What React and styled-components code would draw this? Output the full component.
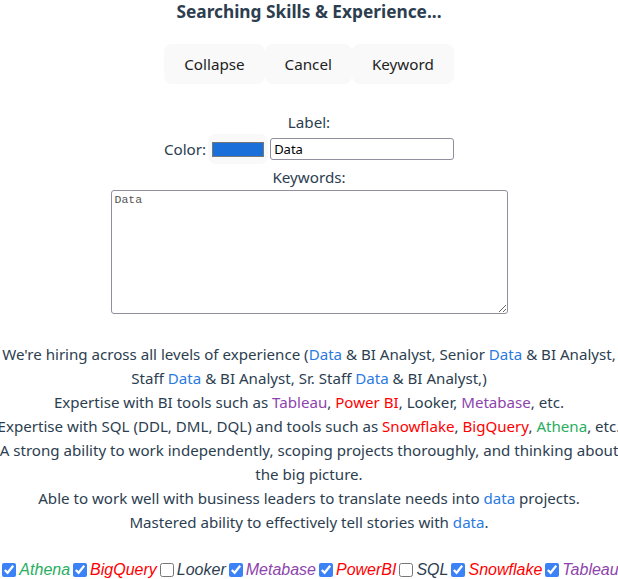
import React, { useState } from 'react';
import styled, { createGlobalStyle } from 'styled-components';

const GlobalStyle = createGlobalStyle`
  html, body {
    margin: 0;
    padding: 0;
    overflow: hidden;
  }
  body {
    font-family: "Noto Sans", "Open Sans", sans-serif;
    color: #2c3e50;
    background: #fff;
  }
`;

const Page = styled.div`
  display: flex;
  flex-direction: column;
  align-items: center;
  width: 618px;
  overflow: hidden;
`;

const Title = styled.h1`
  margin: 1px 0 0;
  font-size: 17.3px;
  line-height: 22px;
  font-weight: 700;
`;

const Toolbar = styled.div`
  display: flex;
  margin-top: 21px;
`;

const Button = styled.button`
  font-family: inherit;
  font-size: 15.2px;
  color: #222;
  background: #f9f9f9;
  border: 1px solid transparent;
  border-radius: 8px;
  height: 40px;
  padding: 0 ${(p) => p.$pad || 19}px;
  cursor: pointer;
`;

const Form = styled.div`
  display: flex;
  flex-direction: column;
  align-items: center;
  margin-top: 26px;
`;

const FieldLabel = styled.div`
  font-size: 15.2px;
  line-height: 24px;
`;

const ColorRow = styled.div`
  display: flex;
  align-items: center;
  gap: 2px;
  margin: 0 0 1px;
`;

const ColorInput = styled.input`
  width: 60px;
  height: 30px;
  padding: 8px 4px 7px 4px;
  background: #f9f9f9;
  border: none;
  border-radius: 8px;
  cursor: pointer;
  &::-webkit-color-swatch-wrapper { padding: 0; }
  &::-webkit-color-swatch {
    border: 1px solid #777;
    border-radius: 0;
  }
`;

const TextInput = styled.input`
  width: 184px;
  height: 22px;
  box-sizing: border-box;
  padding: 1px 3px;
  font-family: inherit;
  font-size: 13px;
  color: #000;
  border: 1px solid #8f8f9d;
  border-radius: 3px;
`;

const KeywordsArea = styled.textarea`
  width: 397px;
  height: 124px;
  box-sizing: border-box;
  margin-top: 1px;
  padding: 2px 3px;
  font-family: "Liberation Mono", monospace;
  font-size: 11.5px;
  color: #555;
  border: 1px solid #8f8f9d;
  border-radius: 3px;
`;

const Description = styled.div`
  display: flex;
  justify-content: center;
  width: 618px;
  margin-top: 28px;
`;

const DescriptionText = styled.div`
  flex: none;
  width: 640px;
  text-align: center;
  font-size: 15.1px;
  line-height: 24px;
`;

const Line = styled.div``;

const Tag = styled.span`
  color: ${(p) => p.$color};
`;

const Filters = styled.div`
  display: flex;
  justify-content: center;
  width: 618px;
  margin-top: 27px;
`;

const FilterList = styled.div`
  flex: none;
  display: flex;
  align-items: center;
  white-space: nowrap;
  font-family: "Liberation Sans", Arial, sans-serif;
  font-style: italic;
  font-size: 16px;
`;

const FilterItem = styled.label`
  display: flex;
  align-items: center;
  color: ${(p) => p.$color};
`;

const Check = styled.input`
  width: 14px;
  height: 14px;
  margin: 0 3px 0 3px;
  accent-color: #3b82f6;
`;

const BLUE = '#2a7ae2';
const PURPLE = '#8e44ad';
const RED = '#ff0000';
const GREEN = '#27ae60';
const DARK = '#2c3e50';

const filters = [
  { name: 'Athena', color: GREEN, on: true },
  { name: 'BigQuery', color: RED, on: true },
  { name: 'Looker', color: DARK, on: false },
  { name: 'Metabase', color: PURPLE, on: true },
  { name: 'PowerBI', color: RED, on: true },
  { name: 'SQL', color: DARK, on: false },
  { name: 'Snowflake', color: RED, on: true },
  { name: 'Tableau', color: PURPLE, on: true },
];

export default function App() {
  const [checks, setChecks] = useState(filters.map((f) => f.on));

  return (
    <>
      <GlobalStyle />
      <Page>
        <Title>Searching Skills &amp; Experience...</Title>
        <Toolbar>
          <Button $pad={19}>Collapse</Button>
          <Button $pad={19}>Cancel</Button>
          <Button $pad={19}>Keyword</Button>
        </Toolbar>

        <Form>
          <FieldLabel>Label:</FieldLabel>
          <ColorRow>
            <FieldLabel>Color:</FieldLabel>
            <ColorInput type="color" defaultValue="#1a6fd8" />
            <TextInput type="text" defaultValue="Data" />
          </ColorRow>
          <FieldLabel>Keywords:</FieldLabel>
          <KeywordsArea defaultValue="Data" />
        </Form>

        <Description>
          <DescriptionText>
            <Line>
              We're hiring across all levels of experience (<Tag $color={BLUE}>Data</Tag> &amp; BI Analyst, Senior{' '}
              <Tag $color={BLUE}>Data</Tag> &amp; BI Analyst, Staff <Tag $color={BLUE}>Data</Tag> &amp; BI Analyst, Sr.
              Staff <Tag $color={BLUE}>Data</Tag> &amp; BI Analyst,)
            </Line>
            <Line>
              Expertise with BI tools such as <Tag $color={PURPLE}>Tableau</Tag>, <Tag $color={RED}>Power BI</Tag>,
              Looker, <Tag $color={PURPLE}>Metabase</Tag>, etc.
            </Line>
            <Line>
              Expertise with SQL (DDL, DML, DQL) and tools such as <Tag $color={RED}>Snowflake</Tag>,{' '}
              <Tag $color={RED}>BigQuery</Tag>, <Tag $color={GREEN}>Athena</Tag>, etc.
            </Line>
            <Line>
              A strong ability to work independently, scoping projects thoroughly, and thinking about the big picture.
            </Line>
            <Line>
              Able to work well with business leaders to translate needs into <Tag $color={BLUE}>data</Tag> projects.
            </Line>
            <Line>
              Mastered ability to effectively tell stories with <Tag $color={BLUE}>data</Tag>.
            </Line>
          </DescriptionText>
        </Description>

        <Filters>
          <FilterList>
            {filters.map((f, i) => (
              <FilterItem key={f.name} $color={f.color}>
                <Check
                  type="checkbox"
                  checked={checks[i]}
                  onChange={() => setChecks((c) => c.map((v, j) => (j === i ? !v : v)))}
                />
                {f.name}
              </FilterItem>
            ))}
          </FilterList>
        </Filters>
      </Page>
    </>
  );
}
